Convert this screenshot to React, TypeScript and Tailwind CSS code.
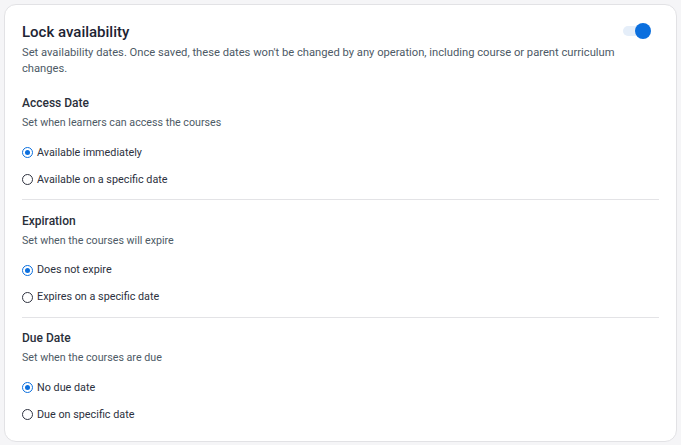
import React from "react";

function Radio({ checked, label }: { checked?: boolean; label: string }) {
  return (
    <div className="flex h-[27px] items-center">
      <span
        className={
          checked
            ? "flex h-[11px] w-[11px] items-center justify-center rounded-full border-[1.5px] border-[#0b6fde]"
            : "flex h-[11px] w-[11px] items-center justify-center rounded-full border-[1.2px] border-[#2f3340]"
        }
      >
        {checked && <span className="h-[5px] w-[5px] rounded-full bg-[#0b6fde]" />}
      </span>
      <span className="ml-[4px] text-[10.8px] leading-[16px] text-[#2c3140]">{label}</span>
    </div>
  );
}

function Section({
  title,
  sub,
  a,
  b,
  divider,
}: {
  title: string;
  sub: string;
  a: string;
  b: string;
  divider?: boolean;
}) {
  return (
    <div>
      <div className="h-[20px] text-[12px] font-medium leading-[20px] text-[#2a2f3a]">{title}</div>
      <div className="h-[20px] text-[10.7px] leading-[20px] text-[#4d5a66]">{sub}</div>
      <div className="mt-[6px]">
        <Radio checked label={a} />
        <Radio label={b} />
      </div>
      {divider && <div className="mb-[10.5px] mt-[6px] h-px bg-[#e3e3e6]" />}
    </div>
  );
}

export default function App() {
  return (
    <div
      className="min-h-[445px] w-full bg-[#f5f5f7] p-[4px]"
      style={{ fontFamily: "Roboto, 'Noto Sans', sans-serif" }}
    >
      <div className="rounded-[12px] border border-[#e2e2e5] bg-white px-[17px] pb-[13px] pt-[15px]">
        <div className="flex items-start">
          <div className="flex-1">
            <div className="text-[15px] font-medium leading-[24px] text-[#1d2433]">Lock availability</div>
            <div className="mt-[1px] text-[11.2px] leading-[16px] text-[#4d5a66]">
              Set availability dates. Once saved, these dates won't be changed by any operation, including course or
              parent curriculum changes.
            </div>
          </div>
          <div className="ml-[8px] mr-[8px] mt-[3px] w-[28px] shrink-0">
            <div className="relative h-[16px] w-[28px]">
              <div className="absolute left-0 right-[3px] top-[3px] h-[10px] rounded-full bg-[#e5eef9]" />
              <div className="absolute right-0 top-0 h-[16px] w-[16px] rounded-full bg-[#0b6fde]" />
            </div>
          </div>
        </div>
        <div className="mt-[16px]">
          <Section
            title="Access Date"
            sub="Set when learners can access the courses"
            a="Available immediately"
            b="Available on a specific date"
            divider
          />
          <Section
            title="Expiration"
            sub="Set when the courses will expire"
            a="Does not expire"
            b="Expires on a specific date"
            divider
          />
          <Section
            title="Due Date"
            sub="Set when the courses are due"
            a="No due date"
            b="Due on specific date"
          />
        </div>
      </div>
    </div>
  );
}
